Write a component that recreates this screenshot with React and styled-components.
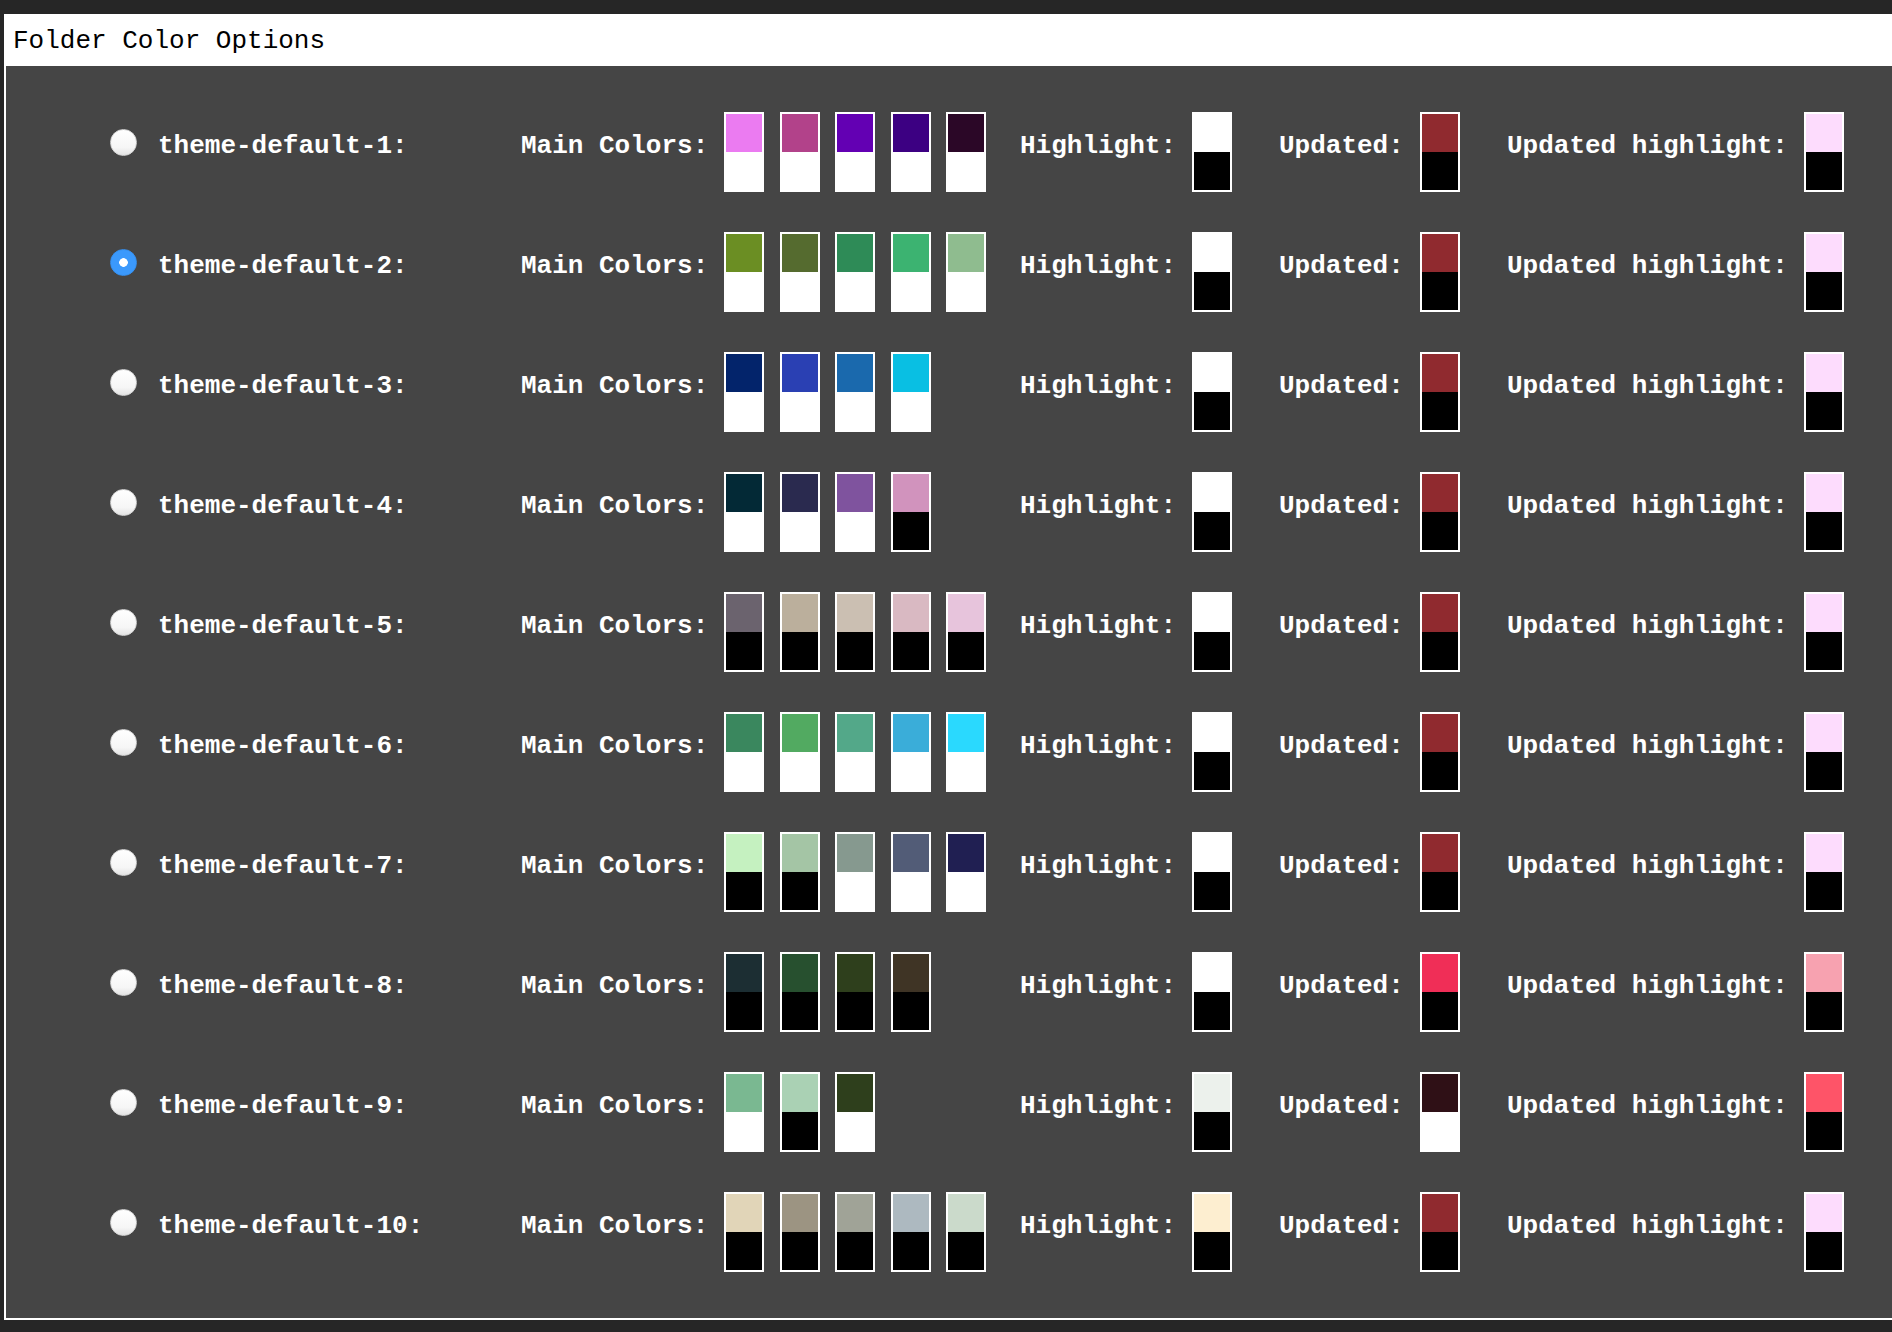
import React from "react";
import styled, { createGlobalStyle } from "styled-components";

const GlobalStyle = createGlobalStyle`
  html, body {
    margin: 0;
    padding: 0;
    background: #262626;
    overflow: hidden;
  }
  body {
    font-family: "Liberation Mono", "Courier New", monospace;
  }
`;

const W = "#ffffff";
const B = "#000000";

const themes = [
  {
    main: [["#eb7bf1", W], ["#b2428a", W], ["#6300b3", W], ["#3c0082", W], ["#2b0727", W]],
    highlight: [W, B], updated: ["#902a2f", B], updatedHighlight: ["#fddcfd", B],
  },
  {
    main: [["#6b8e23", W], ["#556b2f", W], ["#2e8b57", W], ["#3cb371", W], ["#8fbc8f", W]],
    highlight: [W, B], updated: ["#902a2f", B], updatedHighlight: ["#fddcfd", B],
  },
  {
    main: [["#03246b", W], ["#2a40b3", W], ["#1a69ad", W], ["#09bfe3", W]],
    highlight: [W, B], updated: ["#902a2f", B], updatedHighlight: ["#fddcfd", B],
  },
  {
    main: [["#032936", W], ["#2a2a4f", W], ["#7f539e", W], ["#d193bd", B]],
    highlight: [W, B], updated: ["#902a2f", B], updatedHighlight: ["#fddcfd", B],
  },
  {
    main: [["#6b636e", B], ["#bbaf9c", B], ["#cbbfb2", B], ["#d9b9c2", B], ["#e7c4dc", B]],
    highlight: [W, B], updated: ["#902a2f", B], updatedHighlight: ["#fddcfd", B],
  },
  {
    main: [["#3a875e", W], ["#52aa61", W], ["#53a889", W], ["#3aadd9", W], ["#2ad9fe", W]],
    highlight: [W, B], updated: ["#902a2f", B], updatedHighlight: ["#fddcfd", B],
  },
  {
    main: [["#c5f1c0", B], ["#a4c5a5", B], ["#86998f", W], ["#525c77", W], ["#201f52", W]],
    highlight: [W, B], updated: ["#902a2f", B], updatedHighlight: ["#fddcfd", B],
  },
  {
    main: [["#1c2e33", B], ["#27502f", B], ["#2e3f1c", B], ["#3f3425", B]],
    highlight: [W, B], updated: ["#f02e57", B], updatedHighlight: ["#f7a2b0", B],
  },
  {
    main: [["#7ab891", W], ["#aad1b4", B], ["#2e3f1c", W]],
    highlight: ["#ecf1ec", B], updated: ["#2f1016", W], updatedHighlight: ["#fe5468", B],
  },
  {
    main: [["#e1d5b8", B], ["#9c9482", B], ["#a0a397", B], ["#adb9c0", B], ["#cbdacb", B]],
    highlight: ["#fdeed0", B], updated: ["#902a2f", B], updatedHighlight: ["#fddcfd", B],
  },
];

const Frame = styled.div`
  margin: 14px 0 12px 4px;
  border: 2px solid #ffffff;
  border-right: none;
  box-sizing: border-box;
`;

const Title = styled.div`
  background: #ffffff;
  color: #000000;
  font-family: "Liberation Mono", "Courier New", monospace;
  font-size: 26px;
  line-height: 30px;
  padding: 10px 8px 10px 7px;
  white-space: nowrap;
`;

const Panel = styled.div`
  background: #454545;
  padding: 26px 0;
`;

const Row = styled.div`
  display: grid;
  grid-template-columns: 411px 499px 259px 228px 1fr;
  align-items: center;
  height: 120px;
  padding-left: 104px;
`;

const Cell = styled.div`
  display: flex;
  align-items: center;
  gap: ${(p) => p.$gap || 16}px;
`;

const Radio = styled.input.attrs({ type: "radio", name: "folder-theme" })`
  appearance: none;
  -webkit-appearance: none;
  margin: 0 0 20px 0;
  width: 27px;
  height: 27px;
  border-radius: 50%;
  box-sizing: border-box;
  flex: none;
  background: ${(p) =>
    p.checked
      ? "radial-gradient(circle, #ffffff 0 4px, #3b99fc 4.6px)"
      : "linear-gradient(#ffffff, #f6f6f6 70%, #e4e4e4)"};
  border: 1px solid ${(p) => (p.checked ? "#3590f0" : "#d6d6d6")};
`;

const Label = styled.span`
  font-family: "Liberation Mono", "Courier New", monospace;
  font-weight: bold;
  font-size: 26px;
  line-height: 30px;
  color: #ffffff;
  white-space: nowrap;
  margin-bottom: 12px;
`;

const Swatches = styled.div`
  display: flex;
  gap: 15.5px;
`;

const Swatch = styled.div`
  width: 40px;
  height: 80px;
  box-sizing: border-box;
  border: 2px solid #ffffff;
  display: flex;
  flex-direction: column;
  flex: none;
`;

const Half = styled.div`
  flex: 1;
  background: ${(p) => p.$color};
`;

function ColorSwatch({ colors }) {
  return (
    <Swatch>
      <Half $color={colors[0]} />
      <Half $color={colors[1]} />
    </Swatch>
  );
}

export default function App() {
  const [selected, setSelected] = React.useState(1);
  return (
    <>
      <GlobalStyle />
      <Frame>
        <Title>Folder Color Options</Title>
        <Panel>
          {themes.map((t, i) => (
            <Row key={i}>
              <Cell $gap={21}>
                <Radio checked={selected === i} onChange={() => setSelected(i)} />
                <Label>theme-default-{i + 1}:</Label>
              </Cell>
              <Cell>
                <Label>Main Colors:</Label>
                <Swatches>
                  {t.main.map((c, j) => (
                    <ColorSwatch key={j} colors={c} />
                  ))}
                </Swatches>
              </Cell>
              <Cell>
                <Label>Highlight:</Label>
                <ColorSwatch colors={t.highlight} />
              </Cell>
              <Cell>
                <Label>Updated:</Label>
                <ColorSwatch colors={t.updated} />
              </Cell>
              <Cell>
                <Label>Updated highlight:</Label>
                <ColorSwatch colors={t.updatedHighlight} />
              </Cell>
            </Row>
          ))}
        </Panel>
      </Frame>
    </>
  );
}
